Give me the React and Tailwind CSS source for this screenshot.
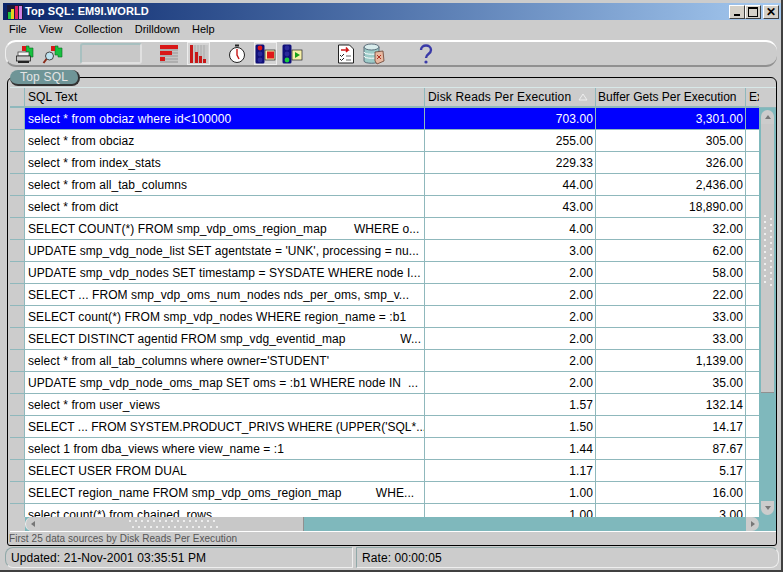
const rows = [
  ['select * from obciaz where id<100000', '703.00', '3,301.00'],
  ['select * from obciaz', '255.00', '305.00'],
  ['select * from index_stats', '229.33', '326.00'],
  ['select * from all_tab_columns', '44.00', '2,436.00'],
  ['select * from dict', '43.00', '18,890.00'],
  ['SELECT COUNT(*) FROM smp_vdp_oms_region_map        WHERE o...', '4.00', '32.00'],
  ["UPDATE smp_vdg_node_list SET agentstate = 'UNK', processing = nu...", '3.00', '62.00'],
  ['UPDATE smp_vdp_nodes SET timestamp = SYSDATE WHERE node I...', '2.00', '58.00'],
  ['SELECT ... FROM smp_vdp_oms_num_nodes nds_per_oms, smp_v...', '2.00', '22.00'],
  ['SELECT count(*) FROM smp_vdp_nodes WHERE region_name = :b1', '2.00', '33.00'],
  ['SELECT DISTINCT agentid FROM smp_vdg_eventid_map                W...', '2.00', '33.00'],
  ["select * from all_tab_columns where owner='STUDENT'", '2.00', '1,139.00'],
  ['UPDATE smp_vdp_node_oms_map SET oms = :b1 WHERE node IN  ...', '2.00', '35.00'],
  ['select * from user_views', '1.57', '132.14'],
  ["SELECT ... FROM SYSTEM.PRODUCT_PRIVS WHERE (UPPER('SQL*...", '1.50', '14.17'],
  ['select 1 from dba_views where view_name = :1', '1.44', '87.67'],
  ['SELECT USER FROM DUAL', '1.17', '5.17'],
  ['SELECT region_name FROM smp_vdp_oms_region_map          WHE...', '1.00', '16.00'],
  ['select count(*) from chained_rows', '1.00', '3.00'],
]

const menus = ['File', 'View', 'Collection', 'Drilldown', 'Help']

function Flag({ x = 11 }) {
  return (
    <g>
      <path d={`M${x} 3h3v2h4v9h-4v-2h-3z`} fill="#18c040" stroke="#0a6a20" strokeWidth="0.6" />
      <rect x={x - 4} y="3" width="4" height="5" fill="#d81818" />
    </g>
  )
}

function PrintIcon() {
  return (
    <svg width="22" height="22" viewBox="0 0 22 22">
      <Flag />
      <rect x="3" y="9" width="11" height="4" fill="#f4f4f4" stroke="#333" strokeWidth="0.7" />
      <rect x="1.5" y="13" width="14" height="5" fill="#c8c8c8" stroke="#222" strokeWidth="0.8" />
      <rect x="3" y="18" width="11" height="2" fill="#222" />
    </svg>
  )
}

function FindIcon() {
  return (
    <svg width="22" height="22" viewBox="0 0 22 22">
      <Flag x={13} />
      <circle cx="7.5" cy="13" r="4" fill="#bfe3f0" stroke="#444" strokeWidth="1" />
      <path d="M4.5 16 1.5 20" stroke="#8a2a18" strokeWidth="2" />
    </svg>
  )
}

function BarsAcross() {
  return (
    <svg width="18" height="18" viewBox="0 0 18 18">
      <rect width="18" height="18" fill="#c4c4c4" />
      <path d="M0 2h18M0 5h18M0 8h18M0 11h18M0 14h18M0 17h18" stroke="#999" strokeWidth="1" />
      <rect x="0" y="0" width="18" height="4" fill="#d81818" />
      <rect x="0" y="6" width="12" height="4" fill="#d81818" />
      <rect x="0" y="12" width="5" height="4" fill="#d81818" />
    </svg>
  )
}

function BarsUp() {
  return (
    <svg width="18" height="18" viewBox="0 0 18 18">
      <rect width="18" height="18" fill="#c8c8c8" />
      <path d="M2 0v18M5 0v18M8 0v18M11 0v18M14 0v18" stroke="#aaa" strokeWidth="1" />
      <rect x="0" y="0" width="3" height="18" fill="#c81818" />
      <rect x="5" y="7" width="3" height="11" fill="#c81818" />
      <rect x="9" y="11" width="3" height="7" fill="#c81818" />
      <rect x="13" y="14" width="3" height="4" fill="#c81818" />
    </svg>
  )
}

function TimerIcon() {
  return (
    <svg width="18" height="20" viewBox="0 0 18 20">
      <rect x="7" y="0.5" width="4" height="2" fill="#222" />
      <circle cx="9" cy="11" r="7.5" fill="#fff" stroke="#222" strokeWidth="1" />
      <path d="M9 5v6l2 4" stroke="#c81818" strokeWidth="1.4" fill="none" />
    </svg>
  )
}

function LightIcon({ go }) {
  return (
    <svg width="21" height="20" viewBox="0 0 21 20">
      <rect x="0.5" y="0.5" width="9" height="19" rx="1.5" fill="#10107a" />
      <circle cx="5" cy="4" r="2.4" fill={go ? '#2a2a9a' : '#e01818'} />
      <circle cx="5" cy="10" r="2.4" fill="#2a2a9a" />
      <circle cx="5" cy="16" r="2.4" fill={go ? '#18d040' : '#2a2a9a'} />
      <rect x="10" y="6" width="10" height="10" fill="#f6f0a8" stroke="#222" strokeWidth="0.7" />
      {go ? <path d="M13 8v6l5-3z" fill="#18a018" /> : <rect x="12" y="7.5" width="7" height="7" fill="#e01818" />}
    </svg>
  )
}

function ReportIcon() {
  return (
    <svg width="18" height="20" viewBox="0 0 18 20">
      <path d="M1.5 1h11l4 4v14h-15z" fill="#fff" stroke="#222" strokeWidth="1" />
      <path d="M4 6h7l-2-2.500M11 6 9 8" stroke="#d01818" strokeWidth="1.600" fill="none" />
      <path d="M3 11l1.500 1.500L7 10M3 15l1.500 1.500L7 14" stroke="#222" strokeWidth="1" fill="none" />
      <path d="M9 12h5M9 16h5" stroke="#666" strokeWidth="1" />
    </svg>
  )
}

function DbIcon() {
  return (
    <svg width="22" height="22" viewBox="0 0 22 22">
      <path d="M1 4v14c0 3 15 3 15 0V4z" fill="#9ccbc8" stroke="#456" strokeWidth="0.8" />
      <ellipse cx="8.500" cy="4" rx="7.500" ry="3" fill="#d8ecec" stroke="#456" strokeWidth="0.8" />
      <path d="M1 9c0 3 15 3 15 0M1 13c0 3 15 3 15 0" stroke="#fff" strokeWidth="1" fill="none" />
      <path d="M12 9l8-1 1 10-7 3-2-3z" fill="#e8b8a0" stroke="#6a4030" strokeWidth="0.8" />
      <path d="M14 12l4 4M18 12l-4 4" stroke="#b03020" strokeWidth="1" />
    </svg>
  )
}

function HelpIcon() {
  return (
    <svg width="14" height="20" viewBox="0 0 14 20">
      <path d="M2 6c0-6 10-6 10 0 0 4-5 4-5 8" stroke="#3a3aa8" strokeWidth="2.400" fill="none" />
      <circle cx="7" cy="18" r="1.600" fill="#3a3aa8" />
    </svg>
  )
}

function SmallButton({ sunk, children, className }) {
  return (
    <div className={`flex h-[23px] w-[23px] items-center justify-center ${sunk ? 'border border-[#eeeeee] bg-[#d4d4d4]' : ''} ${className}`}>
      {children}
    </div>
  )
}

function WinButton({ children }) {
  return (
    <div className="flex h-[14px] w-[16px] items-center justify-center border border-t-white border-l-white border-r-[#404040] border-b-[#404040] bg-[#d4d0c8] text-black">
      {children}
    </div>
  )
}

function Arrow({ d, className }) {
  return (
    <svg width="8" height="8" viewBox="0 0 8 8" className={className}>
      <path d={d} fill="#777" />
    </svg>
  )
}

// scrollbar grip, two staggered lines of light dots
function Dots({ vertical }) {
  const dots = Array.from({ length: vertical ? 24 : 30 })
  if (vertical) {
    return (
      <div className="mb-[18px] grid w-[8px] grid-cols-2 gap-x-[4px] gap-y-[4px]">
        {dots.map((_, i) => (
          <span key={i} className="h-[2px] w-[2px] bg-[#eeeeee] even:translate-y-[3px]" />
        ))}
      </div>
    )
  }
  return (
    <div className="grid h-[8px] grid-flow-col grid-rows-2 gap-x-[4px] gap-y-[4px]">
      {dots.map((_, i) => (
        <span key={i} className="h-[2px] w-[2px] bg-[#eeeeee] even:translate-x-[3px]" />
      ))}
    </div>
  )
}

export default function App() {
  return (
    <div className="flex h-[572px] w-[783px] flex-col overflow-hidden border-r-2 border-b-2 border-r-[#404040] border-b-[#404040] bg-[#cccccc] pt-[3px] pl-[3px] font-['Liberation_Sans',sans-serif] text-black">
      {/* Title bar */}
      <div className="flex h-[17px] shrink-0 items-center bg-gradient-to-r from-[#0a246a] to-[#a6caf0] pr-[2px] pl-[4px]">
        <svg width="16" height="14" viewBox="0 0 16 14">
          <rect x="0" y="0" width="16" height="14" fill="#1a1a3a" />
          <rect x="1" y="7" width="3" height="7" fill="#20c040" />
          <rect x="4" y="4" width="3" height="10" fill="#e8d020" />
          <rect x="8" y="1" width="3" height="13" fill="#e02060" />
          <rect x="12" y="1" width="3" height="13" fill="#d080e0" />
        </svg>
        <span className="ml-[2px] text-[11px] font-bold tracking-[0.1px] whitespace-nowrap text-white">Top SQL: EM9I.WORLD</span>
        <div className="ml-auto flex">
          <WinButton>
            <span className="mt-[7px] block h-[2px] w-[6px] bg-black" />
          </WinButton>
          <WinButton>
            <span className="block h-[10px] w-[10px] border border-t-2 border-black" />
          </WinButton>
          <div className="ml-[2px]">
            <WinButton>
              <span className="text-[12px] leading-none font-bold">✕</span>
            </WinButton>
          </div>
        </div>
      </div>

      {/* Menu */}
      <div className="flex h-[19px] shrink-0 items-center gap-[12px] pl-[6px] text-[11px]">
        {menus.map((m) => (
          <span key={m}>{m}</span>
        ))}
      </div>

      {/* Toolbar */}
      <div className="mt-[1px] mr-[4px] ml-[2px] flex h-[27px] shrink-0 items-center rounded-[11px] border-t-2 border-b-2 border-l border-t-white border-b-[#909090] border-l-[#eeeeee] pl-[9px]">
        <PrintIcon />
        <div className="ml-[5px]"><FindIcon /></div>
        <div className="ml-[16px] h-[21px] w-[62px] rounded-[3px] border-2 border-[#a8c0c0] border-r-[#e0e0e0] border-b-[#e0e0e0] bg-[#c8c8c8]" />
        <div className="ml-[18px]"><BarsAcross /></div>
        <SmallButton sunk className="ml-[9px]"><BarsUp /></SmallButton>
        <div className="ml-[18px]"><TimerIcon /></div>
        <SmallButton sunk className="ml-[8px]"><LightIcon /></SmallButton>
        <div className="ml-[5px]"><LightIcon go /></div>
        <div className="ml-[34px]"><ReportIcon /></div>
        <div className="ml-[8px]"><DbIcon /></div>
        <div className="ml-[34px]"><HelpIcon /></div>
      </div>

      {/* Top SQL panel */}
      <div className="relative mt-[10px] mr-[4px] ml-[4px] flex h-[469px] shrink-0 flex-col rounded-t-[6px] rounded-b-[3px] border border-black pt-[9px]">
        <div className="absolute top-[-8px] left-[2px] flex h-[16px] w-[70px] items-center justify-center rounded-[8px] border-r-2 border-b-2 border-r-[#333333] border-b-[#333333] bg-[#6f9597] text-[12px] tracking-[0.2px] text-[#e4e4e4]">
          Top SQL
        </div>

        <div className="ml-[2px] flex h-[445px] w-[766px] shrink-0 tracking-[0.08px]">
          <div className="flex min-w-0 flex-1 flex-col">
            {/* Column headers */}
            <div className="grid h-[21px] shrink-0 grid-cols-[15px_400px_171px_150px_13px] border-t border-b-2 border-t-[#d8e8e8] border-b-[#8fb8bc] text-[12px]">
              <div className="border-r border-[#8fb8bc]" />
              <div className="flex items-center border-r border-[#8fb8bc] pl-[3px]">SQL Text</div>
              <div className="flex items-center border-r border-[#8fb8bc] pl-[3px] tracking-[0.16px] whitespace-nowrap">
                Disk Reads Per Execution
                <svg width="10" height="8" viewBox="0 0 10 8" className="ml-[7px]">
                  <path d="M5 1 9 7H1z" fill="none" stroke="#eeeeee" strokeWidth="1" />
                </svg>
              </div>
              <div className="flex items-center border-r border-[#8fb8bc] pl-[2px] tracking-normal whitespace-nowrap">Buffer Gets Per Execution</div>
              <div className="overflow-hidden pl-[3px] leading-[19px]">Ex</div>
            </div>

            {/* Rows */}
            <div className="h-[409px] overflow-hidden text-[12px]">
              {rows.map((r, i) => (
                <div
                  key={i}
                  className={`grid h-[22px] grid-cols-[15px_400px_171px_150px_13px] ${i === 0 ? 'bg-[#0000ff] text-white' : 'bg-white'}`}
                >
                  <div className="border-r border-b border-[#8fb8bc] bg-[#cccccc]" />
                  <div className={`flex items-center overflow-hidden border-r border-b border-[#8fb8bc] pl-[3px] whitespace-pre ${i === 14 ? 'tracking-normal' : ''}`}>{r[0]}</div>
                  <div className="flex items-center justify-end border-r border-b border-[#8fb8bc] pr-[2px]">{r[1]}</div>
                  <div className="flex items-center justify-end border-r border-b border-[#8fb8bc] pr-[2px]">{r[2]}</div>
                  <div className="border-b border-[#8fb8bc]" />
                </div>
              ))}
            </div>

            {/* Horizontal scrollbar */}
            <div className="flex h-[15px] shrink-0 border-b border-white bg-[#7fb8bc]">
              <div className="w-[15px] shrink-0 bg-[#cccccc]" />
              <div className="flex h-full w-[15px] shrink-0 items-center justify-center rounded-l-[7px] border-l border-[#eeeeee] bg-[#cccccc]">
                <Arrow d="M6 1v6L2 4z" />
              </div>
              <div className="flex w-[264px] shrink-0 items-center justify-center border-r border-[#909090] bg-[#c8c8c8]">
                <Dots />
              </div>
              <div className="ml-auto flex w-[13px] items-center justify-center rounded-r-[7px] bg-[#cccccc]">
                <Arrow d="M2 1v6l4-3z" />
              </div>
            </div>
          </div>

          {/* Vertical scrollbar */}
          <div className="flex w-[17px] shrink-0 flex-col">
            <div className="h-[21px] shrink-0 border-t border-b border-t-[#d8e8e8] border-b-[#8fb8bc] bg-[#cccccc]" />
            <div className="flex flex-1 flex-col border-b border-white bg-[#7fb8bc] px-[2px] pt-[2px]">
              <div className="flex h-[14px] shrink-0 items-center justify-center rounded-t-[7px] bg-[#cccccc]">
                <Arrow d="M1 6h6L4 2z" />
              </div>
              <div className="flex h-[269px] shrink-0 items-center justify-center border-b border-[#909090] bg-[#c8c8c8]">
                <Dots vertical />
              </div>
              <div className="mt-[108px] flex h-[14px] shrink-0 items-center justify-center rounded-b-[7px] bg-[#cccccc]">
                <Arrow d="M1 2h6L4 6z" />
              </div>
            </div>
          </div>
        </div>

        <div className="pl-[1px] text-[10px] leading-[13px] tracking-[0.05px] whitespace-nowrap text-[#555555]">
          First 25 data sources by Disk Reads Per Execution
        </div>
      </div>

      {/* Status bar */}
      <div className="mt-[1px] mr-[2px] ml-[2px] flex h-[21px] shrink-0 gap-[3px] text-[12px] tracking-[0.07px]">
        <div className="flex w-[348px] items-center rounded-l-[8px] border border-[#8fa8a8] border-r-[#eeeeee] border-b-[#eeeeee] pl-[5px] whitespace-nowrap">
          Updated: 21-Nov-2001 03:35:51 PM
        </div>
        <div className="flex flex-1 items-center rounded-r-[8px] border border-[#8fa8a8] border-r-[#eeeeee] border-b-[#eeeeee] pl-[5px] whitespace-nowrap">
          Rate: 00:00:05
        </div>
      </div>
    </div>
  )
}
